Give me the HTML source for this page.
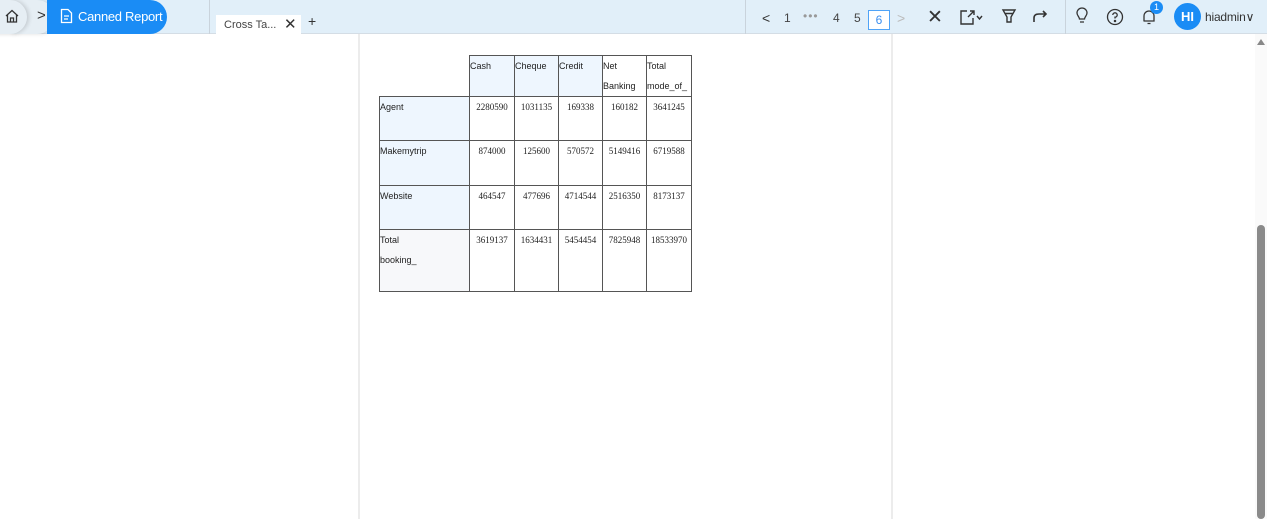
<!DOCTYPE html>
<html><head><style>
*{margin:0;padding:0;box-sizing:border-box}
body{width:1267px;height:519px;overflow:hidden;background:#fff;font-family:"Liberation Sans",sans-serif;position:relative}
.top{position:absolute;left:0;top:0;width:1267px;height:34px;background:#e1eff9;border-bottom:1px solid #d4dde5}
.a{position:absolute}
.sep{position:absolute;top:0;width:1px;height:34px;background:#c9d3dc}
.pl{position:absolute;top:34px;width:2px;height:485px;background:#ececec}
table{position:absolute;left:379px;top:55px;border-collapse:collapse;font-size:9px;color:#222}
td{border:1px solid #555;vertical-align:top;padding:4px 0 0 0;line-height:20px}
td.h{background:#eef6fe;padding-top:0}
td.r{background:#eef6fe;padding-top:0}
td.n{text-align:center;font-family:"Liberation Serif",serif;padding-top:0}
.ic{position:absolute;top:8px}
</style></head><body>
<div class="top">
 <div class="a" style="left:10px;top:0;width:44px;height:34px;border-radius:0 17px 17px 0;background:#e6eef4;box-shadow:2px 0 4px rgba(0,0,0,.12)"></div>
 <div class="a" style="left:-10px;top:0;width:37px;height:34px;border-radius:0 17px 17px 0;background:#e6eef4;box-shadow:2px 0 4px rgba(0,0,0,.15)"></div>
 <div class="a" style="left:47px;top:0;width:120px;height:34px;border-radius:0 17px 17px 0;background:#1a8cf5"></div>
 <svg class="a" style="left:4px;top:8px" width="16" height="16" viewBox="0 0 16 16" fill="none" stroke="#333" stroke-width="1.3"><path d="M2 8 L8 2.5 L14 8 M3.5 6.8V14H12.5V6.8 M6.5 14V10H9.5V14"/></svg>
 <div class="a" style="left:37px;top:7px;font-size:15px;color:#333">&gt;</div>
 <svg class="a" style="left:60px;top:8px" width="13" height="16" viewBox="0 0 13 16" fill="none" stroke="#fff" stroke-width="1.3"><path d="M1.5 1.5H8L11.5 5V14.5H1.5Z M4 8H9 M4 11H8"/></svg>
 <div class="a" style="left:78px;top:9px;font-size:13px;color:#fff;letter-spacing:-0.3px">Canned Report</div>
 <div class="sep" style="left:209px"></div>
 <div class="a" style="left:216px;top:15px;width:85px;height:20px;background:#fff"></div>
 <div class="a" style="left:224px;top:19px;font-size:11px;color:#444">Cross Ta...</div>
 <div class="a" style="left:284px;top:15px;font-size:15px;color:#333">✕</div>
 <div class="a" style="left:308px;top:13px;font-size:14px;color:#333">+</div>
 <div class="sep" style="left:745px"></div>
 <div class="a" style="left:762px;top:10px;font-size:14px;color:#333">&lt;</div>
 <div class="a" style="left:784px;top:11px;font-size:12px;color:#444">1</div>
 <div class="a" style="left:803px;top:9px;font-size:12px;color:#999;letter-spacing:1px">•••</div>
 <div class="a" style="left:833px;top:11px;font-size:12px;color:#444">4</div>
 <div class="a" style="left:854px;top:11px;font-size:12px;color:#444">5</div>
 <div class="a" style="left:868px;top:10px;width:22px;height:20px;border:1px solid #4fa3f7;background:#fff;color:#3a8ef0;font-size:12px;text-align:center;line-height:18px">6</div>
 <div class="a" style="left:897px;top:10px;font-size:14px;color:#bbb">&gt;</div>
 <div class="a" style="left:927px;top:6px;font-size:19px;color:#333">✕</div>
 <svg class="ic" style="left:958px" width="28" height="18" viewBox="0 0 28 18" fill="none" stroke="#333" stroke-width="1.4"><path d="M9 3H3V16H15V10 M10 9L16 3 M12 3H16V7 M19 8L21.5 11L24 8"/></svg>
 <svg class="ic" style="left:1001px" width="16" height="16" viewBox="0 0 16 16" fill="none" stroke="#333" stroke-width="1.4"><path d="M2 2H14L10 9V14H6V9Z M4 5.5H12"/></svg>
 <svg class="ic" style="left:1032px" width="16" height="16" viewBox="0 0 16 16" fill="none" stroke="#333" stroke-width="1.6"><path d="M2 14V10C2 7 4 6 7 6H14 M11 3L14 6L11 9"/></svg>
 <div class="sep" style="left:1065px"></div>
 <svg class="ic" style="left:1074px;top:7px" width="16" height="18" viewBox="0 0 16 18" fill="none" stroke="#333" stroke-width="1.3"><path d="M5.5 12C5.5 10 3 8.5 3 6A5 5 0 0 1 13 6C13 8.5 10.5 10 10.5 12Z M6 15H10"/></svg>
 <svg class="ic" style="left:1106px" width="18" height="18" viewBox="0 0 18 18" fill="none" stroke="#333" stroke-width="1.3"><circle cx="9" cy="9" r="7.5"/><path d="M6.8 7A2.2 2.2 0 1 1 9 9.2V10.5"/><circle cx="9" cy="13" r=".6" fill="#333"/></svg>
 <svg class="ic" style="left:1141px" width="16" height="18" viewBox="0 0 16 18" fill="none" stroke="#333" stroke-width="1.3"><path d="M3 13V8A5 5 0 0 1 13 8V13H2.5H13.5 M6.5 15.5H9.5"/></svg>
 <div class="a" style="left:1150px;top:1px;width:13px;height:13px;border-radius:50%;background:#1a8cf5;color:#fff;font-size:9px;text-align:center;line-height:13px">1</div>
 <div class="a" style="left:1174px;top:3px;width:27px;height:27px;border-radius:50%;background:#1a8cf5;color:#fff;font-size:13px;font-weight:bold;text-align:center;line-height:27px">HI</div>
 <div class="a" style="left:1205px;top:10px;font-size:12px;color:#333;letter-spacing:-0.2px">hiadmin∨</div>
</div>
<div class="pl" style="left:358px"></div>
<div class="pl" style="left:891px"></div>
<div class="a" style="left:1255px;top:34px;width:12px;height:485px;background:#fafafa"></div>
<div class="a" style="left:1257px;top:39px;width:0;height:0;border-left:4px solid transparent;border-right:4px solid transparent;border-bottom:6px solid #888"></div>
<div class="a" style="left:1257px;top:225px;width:8px;height:294px;border-radius:4px;background:#8a8a8a"></div>
<table>
<tr style="height:41px"><td style="border:none;width:90px"></td><td class="h" style="width:45px">Cash</td><td class="h" style="width:44px">Cheque</td><td class="h" style="width:44px">Credit</td><td class="h" style="width:44px;background:#fff">Net<br>Banking</td><td class="h" style="width:45px;background:#fff">Total<br>mode_of_</td></tr>
<tr style="height:44px"><td class="r">Agent</td><td class="n">2280590</td><td class="n">1031135</td><td class="n">169338</td><td class="n">160182</td><td class="n">3641245</td></tr>
<tr style="height:45px"><td class="r">Makemytrip</td><td class="n">874000</td><td class="n">125600</td><td class="n">570572</td><td class="n">5149416</td><td class="n">6719588</td></tr>
<tr style="height:44px"><td class="r">Website</td><td class="n">464547</td><td class="n">477696</td><td class="n">4714544</td><td class="n">2516350</td><td class="n">8173137</td></tr>
<tr style="height:62px"><td class="r" style="background:#f7f8fa">Total<br>booking_</td><td class="n">3619137</td><td class="n">1634431</td><td class="n">5454454</td><td class="n">7825948</td><td class="n">18533970</td></tr>
</table>
</body></html>
